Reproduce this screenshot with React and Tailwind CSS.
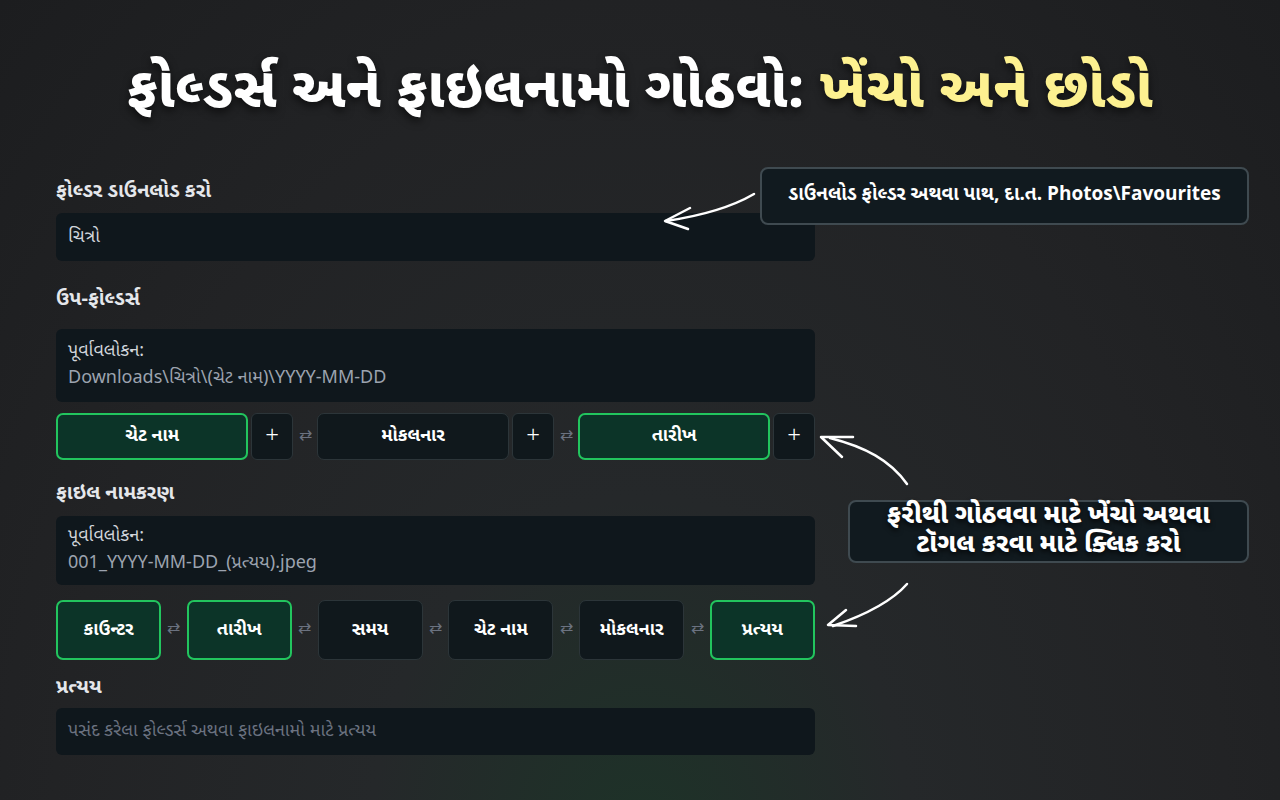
import React from "react";

const F = { fontFamily: '"Noto Sans Gujarati", "Noto Sans", "Lato", sans-serif' };

function Swap() {
  return (
    <div className="w-[24px] flex items-center justify-center text-[#6b7280] text-[16px] leading-none">
      ⇄
    </div>
  );
}

function Chip({ label, active, w, h }) {
  return (
    <div
      className={
        "flex items-center justify-center rounded-[7px] text-white font-bold text-[18px] " +
        (active
          ? "bg-[#0c3428] border-2 border-[#22c55e]"
          : "bg-[#10181c] border border-[#2c3539]")
      }
      style={{ width: w, height: h }}
    >
      {label}
    </div>
  );
}

function Plus() {
  return (
    <div className="w-[42px] h-[47px] ml-[3px] flex items-center justify-center rounded-[6px] bg-[#10181c] border border-[#2c3539] text-white text-[24px] font-light">
      +
    </div>
  );
}

export default function App() {
  return (
    <div
      style={F}
      className="relative w-[1280px] h-[800px] overflow-hidden bg-[radial-gradient(ellipse_at_50%_108%,#1d3328_0%,#25282a_30%,#222325_65%,#1c1d1f_100%)] text-white"
    >
      <h1 className="pt-[56px] text-center text-[56px] font-extrabold leading-[76px] tracking-[0.5px] [text-shadow:0_4px_8px_rgba(0,0,0,0.6)]">
        ફોલ્ડર્સ અને ફાઇલનામો ગોઠવો: <span className="text-[#fdf190]">ખેંચો અને છોડો</span>
      </h1>

      <div className="ml-[56px] w-[759px] mt-[48px]">
        <div className="text-[20px] font-bold text-[#e5e7eb] leading-[24px]">ફોલ્ડર ડાઉનલોડ કરો</div>
        <div className="mt-[9px] h-[48px] rounded-[6px] bg-[#0f171c] px-[12px] flex items-center text-[18px] text-[#d1d5db]">
          ચિત્રો
        </div>

        <div className="mt-[27px] text-[20px] font-bold text-[#e5e7eb] leading-[24px]">ઉપ-ફોલ્ડર્સ</div>
        <div className="mt-[17px] h-[73px] rounded-[6px] bg-[#0f171c] px-[12px] pt-[9px] text-[18px] leading-[27px]">
          <div className="text-[#d1d5db]">પૂર્વાવલોકન:</div>
          <div className="text-[#9ca3af]">Downloads\ચિત્રો\(ચેટ નામ)\YYYY-MM-DD</div>
        </div>

        <div className="mt-[11px] flex items-center">
          <Chip label="ચેટ નામ" active w={193} h={47} />
          <Plus />
          <Swap />
          <Chip label="મોકલનાર" w={193} h={47} />
          <Plus />
          <Swap />
          <Chip label="તારીખ" active w={193} h={47} />
          <Plus />
        </div>

        <div className="mt-[22px] text-[20px] font-bold text-[#e5e7eb] leading-[24px]">ફાઇલ નામકરણ</div>
        <div className="mt-[10px] h-[69px] rounded-[6px] bg-[#0f171c] px-[12px] pt-[7px] text-[18px] leading-[27px]">
          <div className="text-[#d1d5db]">પૂર્વાવલોકન:</div>
          <div className="text-[#9ca3af]">001_YYYY-MM-DD_(પ્રત્યય).jpeg</div>
        </div>

        <div className="mt-[15px] flex items-center justify-between">
          <Chip label="કાઉન્ટર" active w={105} h={60} />
          <Swap />
          <Chip label="તારીખ" active w={105} h={60} />
          <Swap />
          <Chip label="સમય" w={105} h={60} />
          <Swap />
          <Chip label="ચેટ નામ" w={105} h={60} />
          <Swap />
          <Chip label="મોકલનાર" w={105} h={60} />
          <Swap />
          <Chip label="પ્રત્યય" active w={105} h={60} />
        </div>

        <div className="mt-[16px] text-[20px] font-bold text-[#e5e7eb] leading-[24px]">પ્રત્યય</div>
        <div className="mt-[8px] h-[47px] rounded-[6px] bg-[#0f171c] px-[12px] flex items-center text-[18px] text-[#6b7280]">
          પસંદ કરેલા ફોલ્ડર્સ અથવા ફાઇલનામો માટે પ્રત્યય
        </div>
      </div>

      {/* Callout 1 */}
      <div className="absolute left-[760px] top-[167px] w-[489px] h-[58px] rounded-[8px] bg-[#111a1f] border-2 border-[#3f4a50] flex items-center justify-center text-[19px] font-bold text-white">
        ડાઉનલોડ ફોલ્ડર અથવા પાથ, દા.ત. Photos\Favourites
      </div>

      {/* Callout 2 */}
      <div className="absolute left-[848px] top-[500px] w-[401px] h-[63px] rounded-[8px] bg-[#111a1f] border-2 border-[#3f4a50] flex flex-col items-center justify-center text-[26px] font-extrabold text-white leading-[29px] [text-shadow:0_3px_5px_rgba(0,0,0,0.7)]">
        <div>ફરીથી ગોઠવવા માટે ખેંચો અથવા</div>
        <div>ટૉગલ કરવા માટે ક્લિક કરો</div>
      </div>

      {/* Arrows */}
      <svg className="absolute left-0 top-0 pointer-events-none" width="1280" height="800" fill="none" stroke="white" strokeLinecap="round" strokeLinejoin="round">
        <path d="M754 194 C730 208 700 216 666 221" strokeWidth="2.5" />
        <path d="M690 208 L665 221 L688 229" strokeWidth="2.5" />
        <path d="M907 484 C890 460 865 447 830 438" strokeWidth="2.5" />
        <path d="M853 437 L821 437 L842 457" strokeWidth="2.5" />
        <path d="M907 584 C893 600 868 614 833 626" strokeWidth="2.5" />
        <path d="M846 610 L828 625 L856 626" strokeWidth="2.5" />
      </svg>
    </div>
  );
}
